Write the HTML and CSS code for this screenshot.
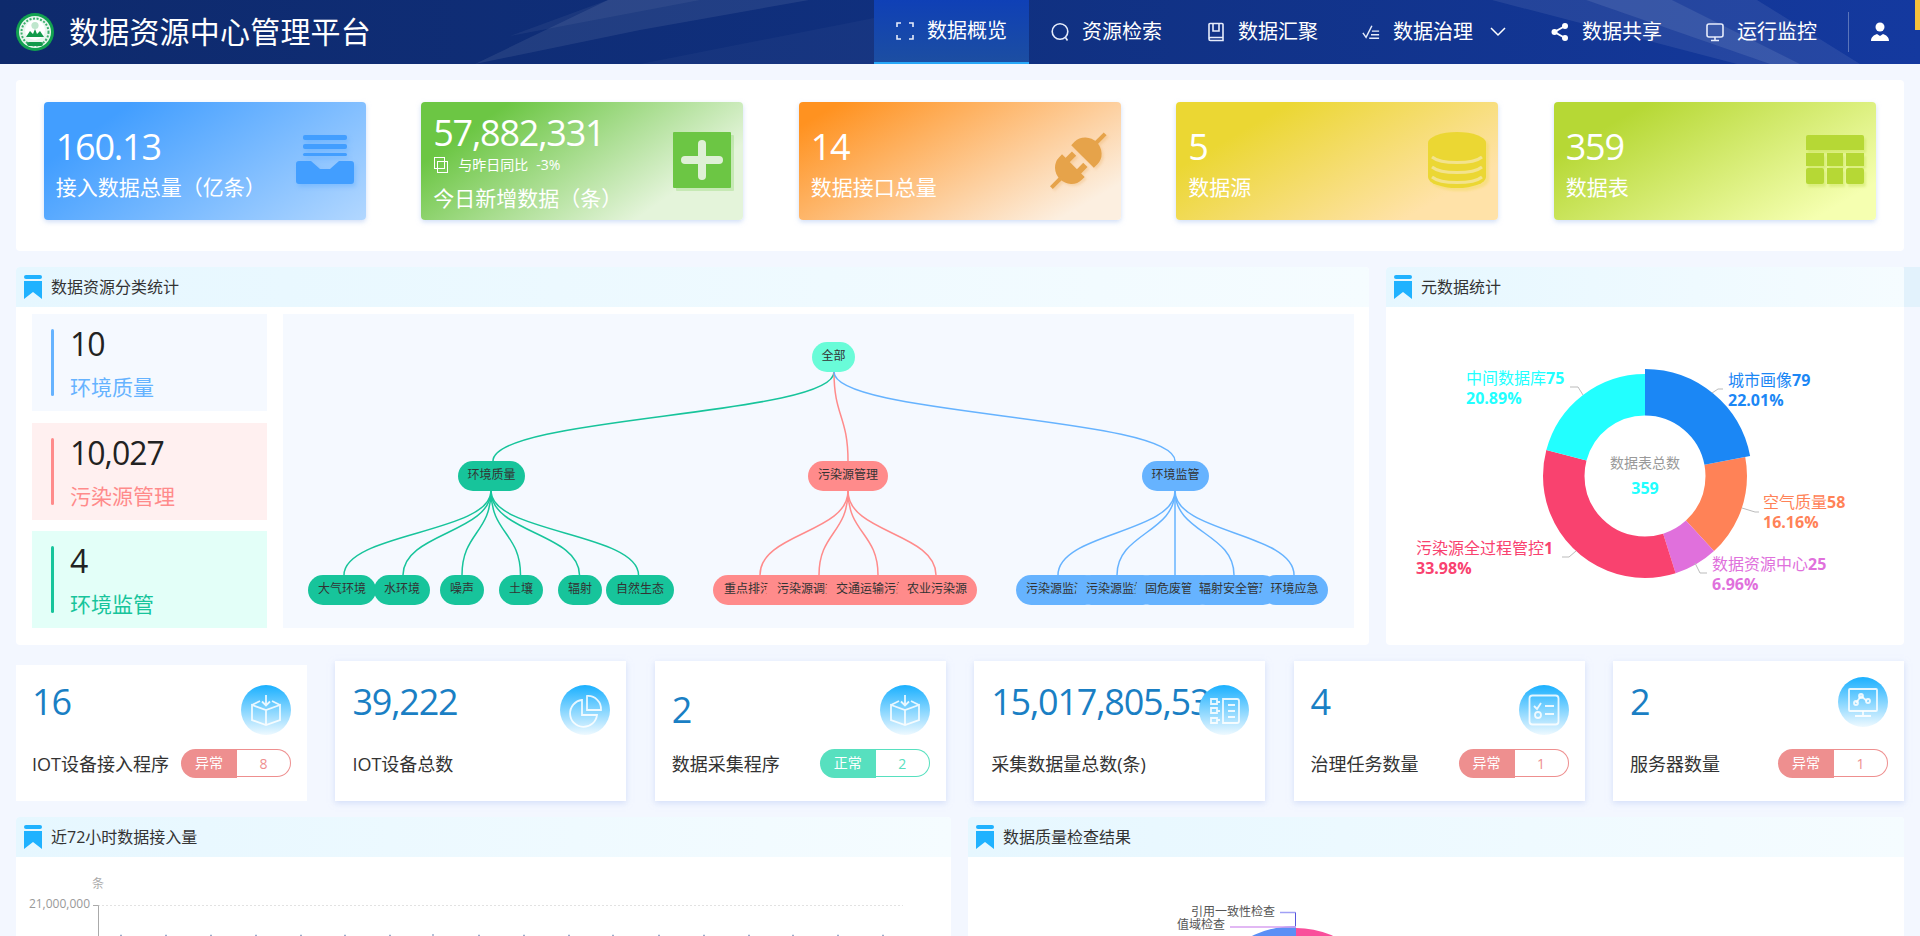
FILE: index.html
```html
<!DOCTYPE html>
<html lang="zh-CN">
<head>
<meta charset="utf-8">
<title>数据资源中心管理平台</title>
<link rel="stylesheet" href="styles.css">
</head>
<body>
<header class="topbar">
  <svg class="topbar-art" viewBox="0 0 1920 64" preserveAspectRatio="none" aria-hidden="true">
    <polygon class="art-a" points="475,64 608,0 809,0 640,30"/>
    <polygon class="art-c" points="510,36 608,0 700,0"/>
    <polygon class="art-d" points="640,64 874,18 874,64"/>
    <polygon class="art-b" points="1492,0 1586,0 1770,64 1737,64"/>
    <polygon class="art-e" points="1586,0 1672,0 1800,64 1770,64"/>
    <polygon class="art-b" points="1672,0 1757,0 1860,64 1800,64"/>
  </svg>
  <svg class="logo" viewBox="0 0 38 38" aria-hidden="true">
    <circle cx="19" cy="19" r="19" fill="#12a150"/>
    <circle cx="19" cy="19" r="16" fill="#e9f6ee"/>
    <circle cx="19" cy="19" r="13.5" fill="none" stroke="#3bb06c" stroke-width="2" stroke-dasharray="2 1.6"/>
    <circle cx="19" cy="17" r="10" fill="#fff"/>
    <circle cx="19" cy="12.5" r="3.6" fill="#bfe6cd"/>
    <path d="M10 24 L14 18 L17 21 L19 16 L21 21 L24 18 L28 24 Z" fill="#129a4b"/>
    <rect x="11" y="29" width="16" height="4" rx="2" fill="#129a4b"/>
  </svg>
  <h1 class="brand">数据资源中心管理平台</h1>
  <nav class="nav">
    <a class="nav-item nav-item-active">
      <svg class="nav-icon" viewBox="0 0 18 20" aria-hidden="true"><path d="M1 6V2h4M13 2h4v4M17 14v4h-4M5 18H1v-4"/></svg>
      <span>数据概览</span>
    </a>
    <a class="nav-item nav-item-long">
      <svg class="nav-icon" viewBox="0 0 18 20" aria-hidden="true"><circle cx="9" cy="9.5" r="7.8"/><path d="M14.5 15.5l2 3"/></svg>
      <span>资源检索</span>
    </a>
    <a class="nav-item">
      <svg class="nav-icon" viewBox="0 0 18 20" aria-hidden="true"><path d="M2 17V2.500a1 1 0 0 1 1-1h12a1 1 0 0 1 1 1V18.500H3.500A1.500 1.500 0 0 1 2 17a1.500 1.500 0 0 1 1.500-1.500H16M6 2v7h6V2"/></svg>
      <span>数据汇聚</span>
    </a>
    <a class="nav-item nav-item-wide">
      <svg class="nav-icon" viewBox="0 0 20 20" aria-hidden="true"><path d="M1 11l3.500 5L11 3M11 9h8M10 13h9M8 17h11"/></svg>
      <span>数据治理</span>
      <svg class="nav-chevron" viewBox="0 0 16 10" aria-hidden="true"><path d="M1 1l7 7 7-7"/></svg>
    </a>
    <a class="nav-item">
      <svg class="nav-icon nav-icon-solid" viewBox="0 0 18 20" aria-hidden="true"><circle cx="3.500" cy="10" r="3"/><circle cx="14" cy="4" r="3"/><circle cx="14" cy="16" r="3"/><path class="nav-icon-link" d="M14 4L3.500 10 14 16"/></svg>
      <span>数据共享</span>
    </a>
    <a class="nav-item nav-item-last">
      <svg class="nav-icon" viewBox="0 0 18 20" aria-hidden="true"><rect x="1" y="2" width="16" height="13" rx="2"/><path d="M9 15v3.500M5 18.500h8"/></svg>
      <span>运行监控</span>
    </a>
  </nav>
  <span class="topbar-divider"></span>
  <svg class="user-icon" viewBox="0 0 18 20" aria-hidden="true"><circle cx="9" cy="5" r="4.500"/><path d="M0 19c0-4 3-6 6-7l3 2 3-2c3 1 6 3 6 7z"/></svg>
  <span class="topbar-flag"></span>
</header>

<main class="page">
  <section class="panel kpis">
    <article class="kpi kpi-blue">
      <div class="kpi-text">
        <div class="kpi-num">160.13</div>
        <div class="kpi-label">接入数据总量（亿条）</div>
      </div>
      <svg class="kpi-icon kpi-icon-blue" viewBox="0 0 58 49" aria-hidden="true">
        <rect x="7" width="44" height="5" rx="2"/><rect x="7" y="9" width="44" height="5" rx="2"/><rect x="7" y="18" width="44" height="3" rx="1.500"/>
        <path d="M3 26H15L24 34H34L43 26H55a3 3 0 0 1 3 3V46a3 3 0 0 1-3 3H3a3 3 0 0 1-3-3V29a3 3 0 0 1 3-3z"/>
      </svg>
    </article>
    <article class="kpi kpi-green">
      <div class="kpi-text kpi-text-tall">
        <div class="kpi-num">57,882,331</div>
        <div class="kpi-sub">
          <svg class="kpi-sub-icon" viewBox="0 0 14 16" aria-hidden="true"><rect x="0.500" y="0.500" width="10" height="11"/><rect x="3.500" y="4.500" width="10" height="11"/></svg>
          <span>与昨日同比</span><span>-3%</span>
        </div>
        <div class="kpi-label">今日新增数据（条）</div>
      </div>
      <svg class="kpi-icon kpi-icon-green" viewBox="0 0 58 56" aria-hidden="true">
        <rect width="58" height="56" rx="1"/>
        <rect class="kpi-plus" x="8" y="24" width="42" height="8" rx="4"/><rect class="kpi-plus" x="25" y="8" width="8" height="40" rx="4"/>
      </svg>
    </article>
    <article class="kpi kpi-orange">
      <div class="kpi-text">
        <div class="kpi-num">14</div>
        <div class="kpi-label">数据接口总量</div>
      </div>
      <svg class="kpi-icon kpi-icon-orange" viewBox="0 0 60 60" aria-hidden="true">
        <g transform="rotate(45 30 30)">
          <rect x="28" y="-7" width="4" height="14"/>
          <path d="M14 25H46V20A16 15 0 0 0 14 20Z"/>
          <rect x="19" y="29" width="6" height="10"/><rect x="35" y="29" width="6" height="10"/>
          <path d="M14 38H46V42A16 15 0 0 1 14 42Z"/>
          <rect x="28" y="54" width="4" height="15"/>
        </g>
      </svg>
    </article>
    <article class="kpi kpi-yellow">
      <div class="kpi-text">
        <div class="kpi-num">5</div>
        <div class="kpi-label">数据源</div>
      </div>
      <svg class="kpi-icon kpi-icon-yellow" viewBox="0 0 58 56" aria-hidden="true">
        <path d="M0 11A29 11 0 0 1 58 11V45A29 11 0 0 1 0 45Z"/>
        <path class="kpi-db-line" d="M4 25A27 9 0 0 0 54 25M4 35A27 9 0 0 0 54 35M4 45A27 9 0 0 0 54 45"/>
      </svg>
    </article>
    <article class="kpi kpi-lime">
      <div class="kpi-text">
        <div class="kpi-num">359</div>
        <div class="kpi-label">数据表</div>
      </div>
      <svg class="kpi-icon kpi-icon-lime" viewBox="0 0 58 49" aria-hidden="true">
        <path d="M2 0H56a2 2 0 0 1 2 2V15H0V2a2 2 0 0 1 2-2z"/>
        <rect y="18" width="18" height="13"/><rect x="21" y="18" width="16" height="13"/><rect x="40" y="18" width="18" height="13"/>
        <rect y="33" width="18" height="16" rx="2"/><rect x="21" y="33" width="16" height="16"/><rect x="40" y="33" width="18" height="16" rx="2"/>
      </svg>
    </article>
  </section>

  <div class="row-overview">
    <section class="panel card-section">
      <header class="section-title">
        <svg class="bookmark" viewBox="0 0 18 24" aria-hidden="true"><rect width="18" height="4" rx="2"/><path d="M0 6H18V24L9 17 0 24Z"/></svg>
        <h2>数据资源分类统计</h2>
      </header>
      <div class="class-body">
        <div class="class-list">
          <div class="class-item class-blue">
            <span class="class-bar"></span>
            <div><div class="class-num">10</div><div class="class-label">环境质量</div></div>
          </div>
          <div class="class-item class-red">
            <span class="class-bar"></span>
            <div><div class="class-num">10,027</div><div class="class-label">污染源管理</div></div>
          </div>
          <div class="class-item class-green">
            <span class="class-bar"></span>
            <div><div class="class-num">4</div><div class="class-label">环境监管</div></div>
          </div>
        </div>
        <svg class="tree" viewBox="283 314 1071 314" role="img" aria-label="数据资源分类树">
          <g class="link link-green">
            <path d="M834 372C834 416 493 416 493 461"/>
            <path d="M491 491C491 533 344 533 344 575"/><path d="M491 491C491 533 403 533 403 575"/><path d="M491 491C491 533 462 533 462 575"/>
            <path d="M491 491C491 533 520.500 533 520.500 575"/><path d="M491 491C491 533 579.500 533 579.500 575"/><path d="M491 491C491 533 638.500 533 638.500 575"/>
          </g>
          <g class="link link-red">
            <path d="M834 372C834 416 848 416 848 461"/>
            <path d="M848 491C848 533 760 533 760 575"/><path d="M848 491C848 533 819 533 819 575"/><path d="M848 491C848 533 878 533 878 575"/><path d="M848 491C848 533 936 533 936 575"/>
          </g>
          <g class="link link-blue">
            <path d="M834 372C834 416 1175 416 1175 461"/>
            <path d="M1175 491C1175 533 1058 533 1058 575"/><path d="M1175 491C1175 533 1117 533 1117 575"/><path d="M1175 491V575"/><path d="M1175 491C1175 533 1234 533 1234 575"/><path d="M1175 491C1175 533 1294 533 1294 575"/>
          </g>
          <rect class="node-root" x="812" y="342" width="43" height="30" rx="15"/><text class="node-text" x="833.500" y="360">全部</text>
          <g class="node-green">
            <rect x="458" y="461" width="67" height="30" rx="15"/><text class="node-text" x="491.500" y="479">环境质量</text>
            <rect x="308" y="575" width="68" height="30" rx="15"/><text class="node-text" x="342" y="593">大气环境</text>
            <rect x="374" y="575" width="56" height="30" rx="15"/><text class="node-text" x="402" y="593">水环境</text>
            <rect x="440" y="575" width="44" height="30" rx="15"/><text class="node-text" x="462" y="593">噪声</text>
            <rect x="499" y="575" width="44" height="30" rx="15"/><text class="node-text" x="521" y="593">土壤</text>
            <rect x="558" y="575" width="44" height="30" rx="15"/><text class="node-text" x="580" y="593">辐射</text>
            <rect x="606" y="575" width="68" height="30" rx="15"/><text class="node-text" x="640" y="593">自然生态</text>
          </g>
          <g class="node-red">
            <rect x="808" y="461" width="80" height="30" rx="15"/><text class="node-text" x="848" y="479">污染源管理</text>
            <rect x="713" y="575" width="94" height="30" rx="15"/><text class="node-text" x="760" y="593">重点排污单位</text>
            <rect x="766" y="575" width="106" height="30" rx="15"/><text class="node-text" x="819" y="593">污染源调查数据</text>
            <rect x="826" y="575" width="104" height="30" rx="15"/><text class="node-text" x="878" y="593">交通运输污染源</text>
            <rect x="897" y="575" width="80" height="30" rx="15"/><text class="node-text" x="937" y="593">农业污染源</text>
          </g>
          <g class="node-blue">
            <rect x="1142" y="461" width="67" height="30" rx="15"/><text class="node-text" x="1175.500" y="479">环境监管</text>
            <rect x="1016" y="575" width="84" height="30" rx="15"/><text class="node-text" x="1056" y="593">污染源监测</text>
            <rect x="1076" y="575" width="82" height="30" rx="15"/><text class="node-text" x="1116" y="593">污染源监控</text>
            <rect x="1135" y="575" width="80" height="30" rx="15"/><text class="node-text" x="1175" y="593">固危废管理</text>
            <rect x="1190" y="575" width="88" height="30" rx="15"/><text class="node-text" x="1235" y="593">辐射安全管理</text>
            <rect x="1261" y="575" width="67" height="30" rx="15"/><text class="node-text" x="1294.500" y="593">环境应急</text>
          </g>
        </svg>
      </div>
    </section>
    <section class="panel card-section">
      <header class="section-title section-title-overflow">
        <svg class="bookmark" viewBox="0 0 18 24" aria-hidden="true"><rect width="18" height="4" rx="2"/><path d="M0 6H18V24L9 17 0 24Z"/></svg>
        <h2>元数据统计</h2>
      </header>
      <svg class="donut" viewBox="1386 307 518 338" role="img" aria-label="元数据统计">
        <g transform="rotate(-90 1645 476)" fill="none">
          <circle cx="1645" cy="476" r="81.250" stroke="#ff8257" stroke-width="41.500" pathLength="100" stroke-dasharray="16.160 83.840" stroke-dashoffset="-22.010"/>
          <circle cx="1645" cy="476" r="81.250" stroke="#e070dc" stroke-width="41.500" pathLength="100" stroke-dasharray="6.960 93.040" stroke-dashoffset="-38.170"/>
          <circle cx="1645" cy="476" r="81.250" stroke="#f9426f" stroke-width="41.500" pathLength="100" stroke-dasharray="33.980 66.020" stroke-dashoffset="-45.130"/>
          <circle cx="1645" cy="476" r="81.250" stroke="#22ffff" stroke-width="41.500" pathLength="100" stroke-dasharray="20.890 79.110" stroke-dashoffset="-79.110"/>
          <circle cx="1645" cy="476" r="83.750" stroke="#1b87f5" stroke-width="46.500" pathLength="100" stroke-dasharray="22.010 77.990"/>
        </g>
        <path class="leader" d="M1712 393L1718 389H1723M1742 508L1755 512H1759M1695 563L1700 573H1707M1576 551L1569 557H1562M1583 395L1578 387H1570"/>
        <text class="donut-center" x="1645" y="468">数据表总数</text>
        <text class="donut-total" x="1645" y="494">359</text>
        <g class="donut-label">
          <text class="tone-blue" x="1728" y="386">城市画像<tspan class="strong">79</tspan><tspan class="strong" x="1728" dy="20">22.01%</tspan></text>
          <text class="tone-orange" x="1763" y="508">空气质量<tspan class="strong">58</tspan><tspan class="strong" x="1763" dy="20">16.16%</tspan></text>
          <text class="tone-purple" x="1712" y="570">数据资源中心<tspan class="strong">25</tspan><tspan class="strong" x="1712" dy="20">6.96%</tspan></text>
          <text class="tone-red" x="1416" y="554">污染源全过程管控<tspan class="strong">1</tspan><tspan class="strong" x="1416" dy="20">33.98%</tspan></text>
          <text class="tone-cyan" x="1466" y="384">中间数据库<tspan class="strong">75</tspan><tspan class="strong" x="1466" dy="20">20.89%</tspan></text>
        </g>
      </svg>
    </section>
  </div>

  <div class="row-metrics">
    <article class="metric metric-flat">
      <div class="metric-top">
        <div class="metric-num">16</div>
        <svg class="metric-icon" viewBox="0 0 50 50" aria-hidden="true"><defs><linearGradient id="g1" x1="0" y1="0" x2="0" y2="1"><stop offset="0" stop-color="#1ab0ff"/><stop offset="1" stop-color="#eef9ff"/></linearGradient></defs><circle cx="25" cy="25" r="25" fill="url(#g1)"/><path class="glyph" d="M11 20V35L25 40 39 35V20L25 25ZM25 25V40M11 20L19 16M39 20L31 16M25 10V20M21 16.500L25 20.500 29 16.500"/></svg>
      </div>
      <div class="metric-bottom">
        <div class="metric-label">IOT设备接入程序</div>
        <div class="badge badge-bad"><span class="badge-state">异常</span><span class="badge-count">8</span></div>
      </div>
    </article>
    <article class="metric">
      <div class="metric-top">
        <div class="metric-num">39,222</div>
        <svg class="metric-icon" viewBox="0 0 50 50" aria-hidden="true"><circle cx="25" cy="25" r="25" fill="url(#g1)"/><path class="glyph" d="M22 15A13.500 13.500 0 1 0 37 30H22ZM27 11A13 13 0 0 1 41 25H27Z"/></svg>
      </div>
      <div class="metric-bottom">
        <div class="metric-label">IOT设备总数</div>
      </div>
    </article>
    <article class="metric">
      <div class="metric-top">
        <div class="metric-num metric-num-low">2</div>
        <svg class="metric-icon" viewBox="0 0 50 50" aria-hidden="true"><circle cx="25" cy="25" r="25" fill="url(#g1)"/><path class="glyph" d="M11 20V35L25 40 39 35V20L25 25ZM25 25V40M11 20L19 16M39 20L31 16M25 10V20M21 16.500L25 20.500 29 16.500"/></svg>
      </div>
      <div class="metric-bottom">
        <div class="metric-label">数据采集程序</div>
        <div class="badge badge-ok"><span class="badge-state">正常</span><span class="badge-count">2</span></div>
      </div>
    </article>
    <article class="metric">
      <div class="metric-top">
        <div class="metric-num">15,017,805,535</div>
        <svg class="metric-icon" viewBox="0 0 50 50" aria-hidden="true"><circle cx="25" cy="25" r="25" fill="url(#g1)"/><path class="glyph" d="M24 14H38a2 2 0 0 1 2 2V36a2 2 0 0 1-2 2H24ZM29 20H36M29 26H36M29 32H36M12 14H18V19H12ZM12 23H18V28H12ZM12 33H18V38H12ZM18 17H21M18 26H21M18 35H21"/></svg>
      </div>
      <div class="metric-bottom">
        <div class="metric-label">采集数据量总数(条)</div>
      </div>
    </article>
    <article class="metric">
      <div class="metric-top">
        <div class="metric-num">4</div>
        <svg class="metric-icon" viewBox="0 0 50 50" aria-hidden="true"><circle cx="25" cy="25" r="25" fill="url(#g1)"/><rect class="glyph" x="10.500" y="10.500" width="29" height="29" rx="3"/><path class="glyph" d="M15 21L18 24 22 18M26 21H35M26 29H35"/><circle class="glyph" cx="19" cy="30" r="3"/></svg>
      </div>
      <div class="metric-bottom">
        <div class="metric-label">治理任务数量</div>
        <div class="badge badge-bad"><span class="badge-state">异常</span><span class="badge-count">1</span></div>
      </div>
    </article>
    <article class="metric">
      <div class="metric-top metric-top-raised">
        <div class="metric-num">2</div>
        <svg class="metric-icon" viewBox="0 0 50 50" aria-hidden="true"><circle cx="25" cy="25" r="25" fill="url(#g1)"/><rect class="glyph" x="11" y="12" width="28" height="22" rx="1"/><path class="glyph" d="M25 34V39M17 39H33M18 26L23 19 29 24"/><circle class="glyph" cx="18" cy="26" r="2"/><circle class="glyph" cx="23" cy="19" r="2"/><circle class="glyph" cx="30" cy="24" r="2"/></svg>
      </div>
      <div class="metric-bottom">
        <div class="metric-label">服务器数量</div>
        <div class="badge badge-bad"><span class="badge-state">异常</span><span class="badge-count">1</span></div>
      </div>
    </article>
  </div>

  <div class="row-charts">
    <section class="panel card-section card-section-open">
      <header class="section-title">
        <svg class="bookmark" viewBox="0 0 18 24" aria-hidden="true"><rect width="18" height="4" rx="2"/><path d="M0 6H18V24L9 17 0 24Z"/></svg>
        <h2>近72小时数据接入量</h2>
      </header>
      <svg class="chart" viewBox="16 857 935 79" role="img" aria-label="近72小时数据接入量">
        <text class="axis-unit" x="98" y="888">条</text>
        <text class="axis-text" x="90" y="908">21,000,000</text>
        <path class="grid-line" d="M98 905.500H903"/>
        <path class="axis-line" d="M93 905.500H98.500V936"/>
        <path class="bar-tips" d="M120 935.500H122M165 935.500H167M210 935.500H212M255 935.500H257M300 935.500H302M344 935.500H346M389 935.500H391M433 934V936M478 935.500H480M523 935.500H525M568 935.500H570M612 935.500H614M658 935.500H660M703 935.500H705M748 935.500H750M792 935.500H794M837 935.500H839M882 935.500H884"/>
      </svg>
    </section>
    <section class="panel card-section card-section-open">
      <header class="section-title">
        <svg class="bookmark" viewBox="0 0 18 24" aria-hidden="true"><rect width="18" height="4" rx="2"/><path d="M0 6H18V24L9 17 0 24Z"/></svg>
        <h2>数据质量检查结果</h2>
      </header>
      <svg class="chart" viewBox="968 857 936 79" role="img" aria-label="数据质量检查结果">
        <defs>
          <clipPath id="pieLeft"><rect x="1196" y="900" width="100" height="36"/></clipPath>
          <clipPath id="pieRight"><rect x="1296" y="900" width="100" height="36"/></clipPath>
        </defs>
        <circle cx="1296" cy="1018" r="90" fill="#f94f9b" clip-path="url(#pieRight)"/>
        <circle cx="1296" cy="1028" r="102" fill="#5b8ff5" clip-path="url(#pieLeft)"/>
        <text class="pie-text" x="1275" y="916">引用一致性检查</text>
        <text class="pie-text" x="1225" y="929">值域检查</text>
        <path class="pie-line-a" d="M1280 912.500H1295.500"/>
        <path class="pie-line-b" d="M1295.500 912.500V926"/>
        <path class="pie-line-c" d="M1230 927H1296"/>
      </svg>
    </section>
  </div>
</main>
</body>
</html>
```
FILE: styles.css
```css
* { box-sizing: border-box; }
html, body { margin: 0; height: 936px; overflow: hidden; }
body {
  background: #f3f7ff;
  color: #333;
  font-family: "Open Sans", "Noto Sans CJK SC", sans-serif;
}
h1, h2 { margin: 0; font-weight: 400; }

/* top bar */
.topbar {
  position: relative;
  display: flex;
  align-items: center;
  height: 64px;
  padding-left: 16px;
  padding-right: 31px;
  background: linear-gradient(90deg, #0e2a6c 0%, #10307f 50%, #14399f 100%);
  color: #fff;
}
.topbar-art { position: absolute; inset: 0; width: 100%; height: 100%; }
.art-a { fill: #fff; opacity: .08; }
.art-b { fill: #fff; opacity: .08; }
.art-c { fill: #fff; opacity: .05; }
.art-d { fill: #fff; opacity: .03; }
.art-e { fill: #fff; opacity: .16; }
.logo { position: relative; width: 38px; height: 38px; flex: none; }
.brand { position: relative; margin-left: 15px; font-size: 30px; line-height: 40px; letter-spacing: .2px; white-space: nowrap; }
.nav { position: relative; display: flex; height: 64px; margin-left: auto; }
.nav-item {
  display: flex;
  align-items: center;
  gap: 13px;
  width: 155px;
  padding-left: 22px;
  font-size: 20px;
  line-height: 28px;
  white-space: nowrap;
}
.nav-item-active {
  background: linear-gradient(180deg, #0f40b6 0%, #1c4ea2 100%);
  border-bottom: 2px solid #28a8f8;
}
.nav-item-long { width: 156px; }
.nav-item-wide { width: 189px; }
.nav-item-last { width: 152px; }
.nav-icon { width: 18px; height: 20px; flex: none; fill: none; stroke: #e6ecfb; stroke-width: 1.6; }
.nav-icon-solid { fill: #fff; stroke: none; }
.nav-icon-link { fill: none; stroke: #fff; stroke-width: 2; }
.nav-chevron { width: 16px; height: 10px; margin-left: 4px; fill: none; stroke: #fff; stroke-width: 1.5; }
.topbar-divider { position: relative; width: 1px; height: 40px; margin-left: 12px; background: rgba(255,255,255,.3); }
.user-icon { position: relative; width: 18px; height: 20px; margin-left: 22px; fill: #fff; flex: none; }
.topbar-flag { position: absolute; right: 0; top: 0; width: 5px; height: 30px; background: #f5c33b; }

/* page */
.page { padding: 16px 16px 0; }
.panel { background: #fff; border-radius: 4px; }

.kpis {
  display: flex;
  justify-content: space-between;
  height: 171px;
  padding: 22px 28.3px 22px 27.7px;
}
.kpi {
  display: flex;
  justify-content: space-between;
  align-items: center;
  width: 322px;
  height: 118px;
  padding-left: 12px;
  padding-right: 12px;
  border-radius: 4px;
  color: #fff;
  box-shadow: 0 2px 5px rgba(170,195,240,.55);
}
.kpi-blue { background: linear-gradient(145deg, #429eff 18%, #b2d7ff 100%); }
.kpi-green { background: linear-gradient(145deg, #6cc644 18%, #e4f4da 78%); }
.kpi-orange { background: linear-gradient(150deg, #ff9220 8%, #fcefe0 88%); }
.kpi-yellow { background: linear-gradient(150deg, #ebd733 22%, #ffe2a8 82%); }
.kpi-lime { background: linear-gradient(150deg, #b6d835 18%, #f5ffb0 88%); }
.kpi-text { align-self: flex-start; padding-top: 25px; }
.kpi-text-tall { padding-top: 11px; }
.kpi-num { font-size: 36px; line-height: 40px; letter-spacing: -1.2px; white-space: nowrap; }
.kpi-label { margin-top: 5px; font-size: 21px; line-height: 30px; white-space: nowrap; }
.kpi-text-tall .kpi-label { margin-top: 8px; }
.kpi-sub { display: flex; align-items: center; gap: 8px; height: 20px; margin-top: 2px; padding-left: 1px; font-size: 14px; line-height: 20px; }
.kpi-sub-icon { width: 14px; height: 16px; margin-right: 2px; fill: none; stroke: #fff; }
.kpi-icon { flex: none; margin-bottom: 3px; }
.kpi-icon-blue { width: 58px; height: 49px; fill: #429eff; filter: drop-shadow(2px 3px 2px rgba(66,158,255,.3)); }
.kpi-icon-green { width: 58px; height: 56px; fill: #6cc644; filter: drop-shadow(3px 3px 0 rgba(108,198,68,.25)); }
.kpi-plus { fill: #dff0d6; }
.kpi-icon-orange { width: 60px; height: 60px; fill: #e6a34a; overflow: visible; filter: drop-shadow(2px 2px 1px rgba(230,163,74,.25)); }
.kpi-icon-yellow { width: 58px; height: 56px; fill: #ebd733; filter: drop-shadow(3px 3px 1px rgba(235,215,51,.3)); }
.kpi-db-line { fill: none; stroke: #f3e38c; stroke-width: 3; }
.kpi-icon-lime { width: 58px; height: 49px; fill: #b6d835; filter: drop-shadow(2px 3px 1px rgba(182,216,53,.3)); }

/* sections */
.section-title {
  position: relative;
  display: flex;
  align-items: center;
  gap: 9px;
  height: 40px;
  padding-left: 8px;
  background: linear-gradient(90deg, #e6f7ff 0%, #f5fcff 100%);
  border-radius: 4px 4px 0 0;
}
.section-title h2 { font-size: 16px; line-height: 24px; color: #333; white-space: nowrap; }
.section-title-overflow::after {
  content: "";
  position: absolute;
  left: 100%;
  top: 0;
  width: 16px;
  height: 40px;
  background: #e2f2fc;
}
.bookmark { width: 18px; height: 24px; flex: none; fill: #20b2ff; }

.row-overview {
  display: grid;
  grid-template-columns: 1353px 518px;
  gap: 17px;
  margin-top: 16px;
}
.card-section { height: 378px; }
.class-body {
  display: flex;
  gap: 16px;
  height: 338px;
  padding: 7px 15px 17px 16px;
}
.class-list {
  display: grid;
  grid-template-rows: 97px 97px 97px;
  row-gap: 11.5px;
  flex: none;
  width: 235px;
}
.class-item { display: flex; gap: 16px; height: 97px; padding: 15px 19px 0; }
.class-bar { flex: none; width: 3px; height: 67px; border-radius: 2px; background: currentColor; }
.class-num { height: 30px; font-size: 32px; line-height: 30px; letter-spacing: -1px; color: #222; white-space: nowrap; }
.class-label { margin-top: 13px; font-size: 21px; line-height: 30px; white-space: nowrap; }
.class-blue { background: #f5f9ff; color: #66b3ff; }
.class-red { background: #fff0f0; color: #ff8b8b; }
.class-green { background: #e3fff8; color: #17c49b; }
.tree { display: block; width: 1071px; height: 314px; background: #f5f9ff; }
.link { fill: none; stroke-width: 1.5; }
.link-green { stroke: #17c49b; }
.link-red { stroke: #ff8b8b; }
.link-blue { stroke: #66b3ff; }
.node-root { fill: #69fcd8; }
.node-green { fill: #17c49b; }
.node-red { fill: #ff8b8b; }
.node-blue { fill: #66b3ff; }
.node-text { fill: #333; font-size: 12px; text-anchor: middle; }

.donut { display: block; width: 518px; height: 338px; }
.leader { fill: none; stroke: #bbb; stroke-width: 1; }
.donut-center { fill: #999; font-size: 14px; text-anchor: middle; }
.donut-total { fill: #22ffff; font-size: 16px; font-weight: 700; text-anchor: middle; }
.donut-label { font-size: 16px; }
.strong { font-weight: 700; }
.tone-blue { fill: #1b87f5; }
.tone-orange { fill: #ff8257; }
.tone-purple { fill: #e070dc; }
.tone-red { fill: #f9426f; }
.tone-cyan { fill: #22ffff; }

/* metric cards */
.row-metrics {
  display: grid;
  grid-template-columns: repeat(6, 291px);
  column-gap: 28.4px;
  align-items: end;
  margin-top: 16px;
}
.metric {
  display: flex;
  flex-direction: column;
  height: 140px;
  padding: 21px 16px 0 17px;
  background: #fff;
  box-shadow: 0 2px 6px rgba(190,205,245,.6);
}
.metric-flat { height: 136px; padding-top: 17px; padding-left: 16px; box-shadow: none; }
.metric-top { display: flex; height: 67px; }
.metric-top-raised .metric-icon { margin-top: -5px; }
.metric-num {
  flex: 1;
  min-width: 0;
  height: 40px;
  font-size: 36px;
  line-height: 40px;
  letter-spacing: -1.2px;
  color: #1a7fc4;
  white-space: nowrap;
}
.metric-num-low { margin-top: 8px; }
.metric-icon { position: relative; flex: none; width: 50px; height: 50px; margin-top: 3px; }
.glyph { fill: none; stroke: #fff; stroke-opacity: .85; stroke-width: 1.8; }
.metric-bottom { display: flex; justify-content: space-between; align-items: center; height: 29px; }
.metric-label { font-size: 18px; line-height: 28px; color: #333; white-space: nowrap; }
.badge { display: flex; flex: none; width: 110px; height: 29px; font-size: 14px; line-height: 28px; text-align: center; }
.badge-state { width: 56px; border-radius: 15px 0 0 15px; color: #fff; }
.badge-count { width: 54px; height: 28px; border: 1px solid currentColor; border-left: 0; border-radius: 0 15px 15px 0; }
.badge-bad .badge-state { background: #ee8f8f; }
.badge-bad .badge-count { color: #ee8f8f; }
.badge-ok .badge-state { background: #57e0bf; }
.badge-ok .badge-count { color: #57e0bf; }

/* bottom charts */
.row-charts {
  display: grid;
  grid-template-columns: 935px 936px;
  gap: 17px;
  margin-top: 16px;
}
.card-section-open { height: 119px; border-radius: 4px 4px 0 0; }
.chart { display: block; width: 100%; height: 79px; }
.axis-unit { fill: #aaa; font-size: 12px; text-anchor: middle; }
.axis-text { fill: #999; font-size: 12px; text-anchor: end; }
.grid-line { fill: none; stroke: #e2e2e2; stroke-dasharray: 2 2; }
.axis-line { fill: none; stroke: #aaa; }
.bar-tips { fill: none; stroke: #9aaccc; stroke-width: 1.5; }
.pie-text { fill: #555; font-size: 12px; text-anchor: end; }
.pie-line-a { fill: none; stroke: #a0a0f5; stroke-width: 1.5; }
.pie-line-b { fill: none; stroke: #5555dd; stroke-width: 1; }
.pie-line-c { fill: none; stroke: #d8a0f0; stroke-width: 1.5; }
```
